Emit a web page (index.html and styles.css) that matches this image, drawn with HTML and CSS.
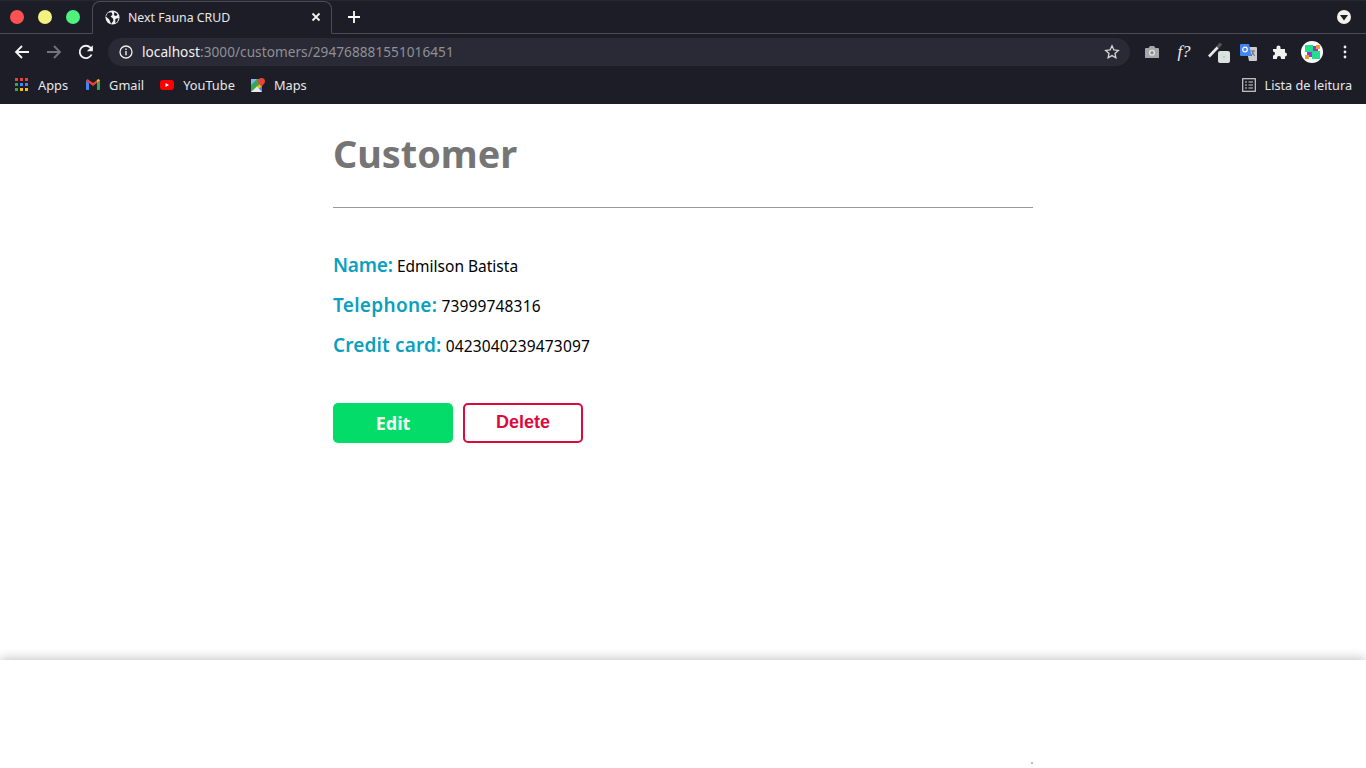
FILE: index.html
```html
<!DOCTYPE html>
<html lang="en">
<head>
<meta charset="utf-8">
<title>Next Fauna CRUD</title>
<link rel="stylesheet" href="styles.css">
</head>
<body>
<header class="browser">
  <div class="tabstrip">
    <div class="lights"><i class="light red"></i><i class="light yellow"></i><i class="light green"></i></div>
    <div class="tab">
      <svg class="favicon" viewBox="0 0 16 16"><circle cx="8" cy="8" r="7.500" fill="#f2f2f2"/><path d="M3 3 7 2.500l1 2.500-2 2 2.500 2 .5 2.500L6.500 15 4.500 10 1 7zM10 2l3.500 2.500-1.500 2-2.500-1zM11 9.500l3.500-1-1.500 4-2 1.500z" fill="#1c1d27"/></svg>
      <span class="tab-title">Next Fauna CRUD</span>
      <svg class="tab-close" viewBox="0 0 10 10"><path d="M1.500 1.500l7 7M8.500 1.500l-7 7" stroke="#f2f2f2" stroke-width="1.800"/></svg>
    </div>
    <svg class="new-tab" viewBox="0 0 12 12"><path d="M6 0v12M0 6h12" stroke="#fff" stroke-width="1.800"/></svg>
    <div class="spacer"></div>
    <svg class="tab-menu" viewBox="0 0 14 14"><circle cx="7" cy="7" r="7" fill="#f4f1e8"/><path d="M3 5h8L7 10.500z" fill="#1c1d27"/></svg>
  </div>
  <div class="toolbar">
    <svg class="nav" viewBox="0 0 16 16"><path d="M15 8H2M8 2 2 8l6 6" fill="none" stroke="#f4f4f4" stroke-width="1.800"/></svg>
    <svg class="nav" viewBox="0 0 16 16"><path d="M1 8h13M8 2l6 6-6 6" fill="none" stroke="#74757b" stroke-width="1.800"/></svg>
    <svg class="nav" viewBox="0 0 16 16"><path d="M13.600 10.500A6.200 6.200 0 1 1 12.400 3.600L14.500 5.700" fill="none" stroke="#f4f4f4" stroke-width="1.800"/><path d="M14.800 1.200v6h-6z" fill="#f4f4f4"/></svg>
    <div class="omnibox">
      <svg class="info" viewBox="0 0 14 14"><circle cx="7" cy="7" r="6" fill="none" stroke="#eee" stroke-width="1.300"/><path d="M7 6v4.300M7 3.500v1.400" stroke="#eee" stroke-width="1.400"/></svg>
      <span class="url"><span class="host">localhost</span>:3000/customers/294768881551016451</span>
      <svg class="star" viewBox="0 0 16 16"><path d="m8 1.800 1.900 4.100 4.400.5-3.300 3 .9 4.400L8 11.600l-3.900 2.200.9-4.400-3.300-3 4.400-.5z" fill="none" stroke="#d8d8d8" stroke-width="1.300"/></svg>
    </div>
    <div class="extensions">
      <svg class="ext" viewBox="0 0 16 16"><path d="M1 5a1 1 0 0 1 1-1h2.500L6 2h4l1.500 2H14a1 1 0 0 1 1 1v9H1z" fill="#a7a7a9"/><circle cx="8" cy="8.800" r="3" fill="#e6e6e6"/><circle cx="8" cy="8.800" r="1.700" fill="#8a8a8c"/></svg>
      <span class="whatfont">f?</span>
      <svg class="picker" viewBox="0 0 24 22"><path d="M1 15.500 10 6" stroke="#e8e8e8" stroke-width="2.600"/><path d="M9.500 6.500 13 2.500" stroke="#555" stroke-width="3.400"/><rect x="10" y="10" width="12" height="12" rx="2" fill="#d9e2de"/><circle cx="16" cy="16" r=".8" fill="#9aa"/></svg>
      <svg class="translate" viewBox="0 0 17 17"><path d="M6 3h10a1 1 0 0 1 1 1v12a1 1 0 0 1-1 1H9z" fill="#c9cbce"/><path d="M1 0h8l2.500 12H1a1 1 0 0 1-1-1V1a1 1 0 0 1 1-1z" fill="#4285f4"/><circle cx="5" cy="5.500" r="2.300" fill="none" stroke="#fff" stroke-width="1.200"/><path d="M10.500 7h4.500M12.800 7v1.500l-1.600 3.500M12.800 8.500l1.800 3.500" fill="none" stroke="#666" stroke-width="1"/></svg>
      <svg class="ext puzzle" viewBox="0 0 16 16"><path d="M1 5h3.500V3.500a2 2 0 0 1 4 0V5H13v3.500a2 2 0 0 1 0 4V15H9v-1a2 2 0 0 0-4 0v1H1v-3.500a2 2 0 0 0 0-4z" fill="#f0f0f0"/></svg>
      <svg class="avatar" viewBox="0 0 22 22"><circle cx="11" cy="11" r="11" fill="#fff"/><rect x="4" y="4" width="8" height="7" fill="#1fe08b"/><rect x="11" y="10" width="8" height="8" fill="#1fe08b"/><rect x="12" y="5" width="5" height="5" fill="#9b35d6"/><rect x="6" y="11" width="5" height="5" fill="#9b35d6"/><rect x="15" y="4" width="4" height="4" fill="#f29a2e"/><rect x="4" y="14" width="4" height="4" fill="#f29a2e"/></svg>
      <svg class="dots" viewBox="0 0 4 14"><circle cx="2" cy="2" r="1.400" fill="#eee"/><circle cx="2" cy="7" r="1.400" fill="#eee"/><circle cx="2" cy="12" r="1.400" fill="#eee"/></svg>
    </div>
  </div>
  <nav class="bookmarks">
    <a class="bookmark apps">
      <svg class="bm-icon" viewBox="0 0 14 14"><path d="M0 0h3v3H0z" fill="#ea4335"/><path d="M5 0h3v3H5z" fill="#ea4335"/><path d="M10 0h3v3h-3z" fill="#ea4335"/><path d="M0 5h3v3H0z" fill="#34a853"/><path d="M5 5h3v3H5z" fill="#4285f4"/><path d="M10 5h3v3h-3z" fill="#4285f4"/><path d="M0 10h3v3H0z" fill="#34a853"/><path d="M5 10h3v3H5z" fill="#fbbc04"/><path d="M10 10h3v3h-3z" fill="#fbbc04"/></svg>
      Apps
    </a>
    <a class="bookmark gmail">
      <svg class="bm-icon" viewBox="0 0 14 14"><path d="M0 2.500 3 4.500V12H1a1 1 0 0 1-1-1z" fill="#4285f4"/><path d="M14 2.500 11 4.500V12h2a1 1 0 0 0 1-1z" fill="#34a853"/><path d="M0 2.500 7 8l7-5.500L12.500 1 7 5 1.500 1z" fill="#ea4335"/><path d="M11 4.500 14 2.500 12.500 1 11 2.100z" fill="#fbbc04"/></svg>
      Gmail
    </a>
    <a class="bookmark youtube">
      <svg class="bm-icon" viewBox="0 0 14 14"><rect x="0" y="2" width="14" height="10" rx="3" fill="#f00"/><path d="M5.500 5v4L9 7z" fill="#fff"/></svg>
      YouTube
    </a>
    <a class="bookmark">
      <svg class="bm-icon" viewBox="0 0 14 14"><path d="M0 1h11v13H0z" fill="#34a853"/><path d="M0 14 11 4v10z" fill="#fbbc04"/><path d="M0 1h6L0 7z" fill="#8ab4f8"/><path d="M4 14l7-6v6z" fill="#4285f4"/><path d="M0 14 6 8.500l5 5.500z" fill="#e8eaed"/><path d="M10.500 0a3.500 3.500 0 0 1 3.500 3.500c0 2-3.500 5-3.500 5S7 5.500 7 3.500A3.500 3.500 0 0 1 10.500 0z" fill="#ea4335"/></svg>
      Maps
    </a>
    <div class="spacer"></div>
    <a class="bookmark reading">
      <svg class="bm-icon" viewBox="0 0 14 14"><rect x=".7" y=".7" width="12.600" height="12.600" fill="none" stroke="#cfcfcf" stroke-width="1.200"/><path d="M3 4h2M6.500 4H11M3 7h2M6.500 7H11M3 10h2M6.500 10H11" stroke="#cfcfcf" stroke-width="1.200"/></svg>
      Lista de leitura
    </a>
  </nav>
</header>
<main class="page">
  <section class="content">
    <h1 class="title">Customer</h1>
    <hr class="rule">
    <div class="fields">
      <p class="field"><span class="label label-name">Name:</span> <span class="value">Edmilson Batista</span></p>
      <p class="field"><span class="label label-phone">Telephone:</span> <span class="value digits">73999748316</span></p>
      <p class="field"><span class="label label-card">Credit card:</span> <span class="value digits">0423040239473097</span></p>
    </div>
    <div class="actions">
      <button class="btn edit">Edit</button>
      <button class="btn delete">Delete</button>
    </div>
  </section>
</main>
<footer class="bottom"><i class="speck"></i></footer>
</body>
</html>
```
FILE: styles.css
```css
* { box-sizing: border-box; }
html, body { margin: 0; height: 768px; overflow: hidden; background: #fff; }
body { font-family: "Noto Sans", "Open Sans", sans-serif; display: flex; flex-direction: column; }
.browser { height: 104px; flex: none; background: #1c1d27; color: #f0f0f0; }
.spacer { flex: 1; }

.tabstrip { height: 34px; display: flex; align-items: flex-end; border-top: 1px solid #25262f; border-bottom: 1px solid #4b4c53; position: relative; }
.lights { width: 92px; height: 33px; padding: 9px 0 0 10px; display: flex; gap: 14px; align-self: flex-start; }
.light { width: 14px; height: 14px; border-radius: 50%; }
.red { background: #fc5352; }
.yellow { background: #f3f17f; }
.green { background: #4ff27c; }
.tab { width: 240px; height: 33px; margin-bottom: -1px; background: #1c1d27; border: 1px solid #4b4c53; border-bottom-color: #1c1d27; border-radius: 8px 8px 0 0; display: flex; align-items: center; padding: 0 10px 1px 12px; }
.favicon { width: 15px; height: 15px; flex: none; }
.tab-title { font-size: 12.300px; margin-left: 8px; flex: 1; color: #e8e8e8; white-space: nowrap; }
.tab-close { width: 10px; height: 10px; flex: none; }
.new-tab { width: 12px; height: 12px; margin: 0 0 10px 16px; flex: none; }
.tab-menu { width: 14px; height: 14px; margin: 0 15px 9px 0; flex: none; }

.toolbar { height: 36px; display: flex; align-items: center; padding-left: 14px; }
.nav { width: 16px; height: 16px; flex: none; margin-right: 16px; }
.omnibox { width: 1022px; height: 28px; margin-left: -2px; background: #292a35; border-radius: 14px; display: flex; align-items: center; padding: 0 10px 0 11px; }
.info { width: 14px; height: 14px; flex: none; }
.url { flex: 1; margin-left: 9px; font-size: 13.640px; color: #8f9096; white-space: nowrap; letter-spacing: .04px; line-height: 17px; padding-bottom: 1px; }
.host { color: #f2f2f2; }
.star { width: 16px; height: 16px; flex: none; }
.extensions { flex: 1; display: flex; align-items: center; padding-left: 14px; }
.ext { width: 16px; height: 16px; flex: none; margin-right: 16px; }
.whatfont { width: 16px; margin-right: 16px; font: italic 17px "Liberation Serif", serif; color: #eee; text-align: center; white-space: nowrap; }
.picker { width: 24px; height: 22px; flex: none; margin-right: 8px; }
.translate { width: 17px; height: 17px; flex: none; margin-right: 15px; }
.puzzle { margin-right: 16px; }
.avatar { width: 22px; height: 22px; flex: none; margin: 0 20px 0 -3px; }
.dots { width: 4px; height: 14px; flex: none; }

.bookmarks { height: 34px; display: flex; align-items: center; padding: 0 14px 4px 15px; }
.bookmark { display: flex; align-items: center; gap: 9px; font-size: 12.800px; color: #e8e8e8; margin-right: 17px; white-space: nowrap; }
.bm-icon { width: 14px; height: 14px; flex: none; }
.reading { margin-right: 0; font-size: 12.700px; gap: 9px; }
.apps { margin-right: 18px; }
.gmail { margin-right: 16px; }
.youtube { margin-right: 16px; }

.page { flex: 1; display: flex; justify-content: center; }
.content { width: 700px; }
.title { margin: 0; padding-top: 22px; font-size: 37.800px; line-height: 56px; font-weight: 700; color: #757575; }
.rule { margin: 25px 0 0; border: 0; height: 1px; background: #999; }
.fields { padding-top: 37px; }
.field { margin: 0; height: 40px; line-height: 40px; color: #000; font-size: 16px; white-space: nowrap; }
.label { font-size: 19px; font-weight: 600; color: #0d9fc0; }
.label-name { letter-spacing: -.2px; }
.label-phone { letter-spacing: .3px; }
.label-card { letter-spacing: .15px; }
.value { font-size: 15.500px; }
.digits { letter-spacing: .15px; }
.actions { display: flex; gap: 10px; padding-top: 38px; }
.btn { width: 120px; height: 40px; border-radius: 5px; font: 700 18px "Liberation Sans", Arial, sans-serif; padding: 0; }
.edit { background: #04dc6a; border: 0; color: #f1f5f0; font-family: "Noto Sans", sans-serif; }
.delete { background: #fff; border: 2px solid #dc0a3c; color: #dc0a3c; padding-bottom: 2px; }

.bottom { height: 108px; flex: none; background: #fff; box-shadow: 0 -2px 10px rgba(0,0,0,.22); position: relative; }
.speck { position: absolute; left: 1031px; top: 102px; width: 2px; height: 2px; background: #bbb; }
```
